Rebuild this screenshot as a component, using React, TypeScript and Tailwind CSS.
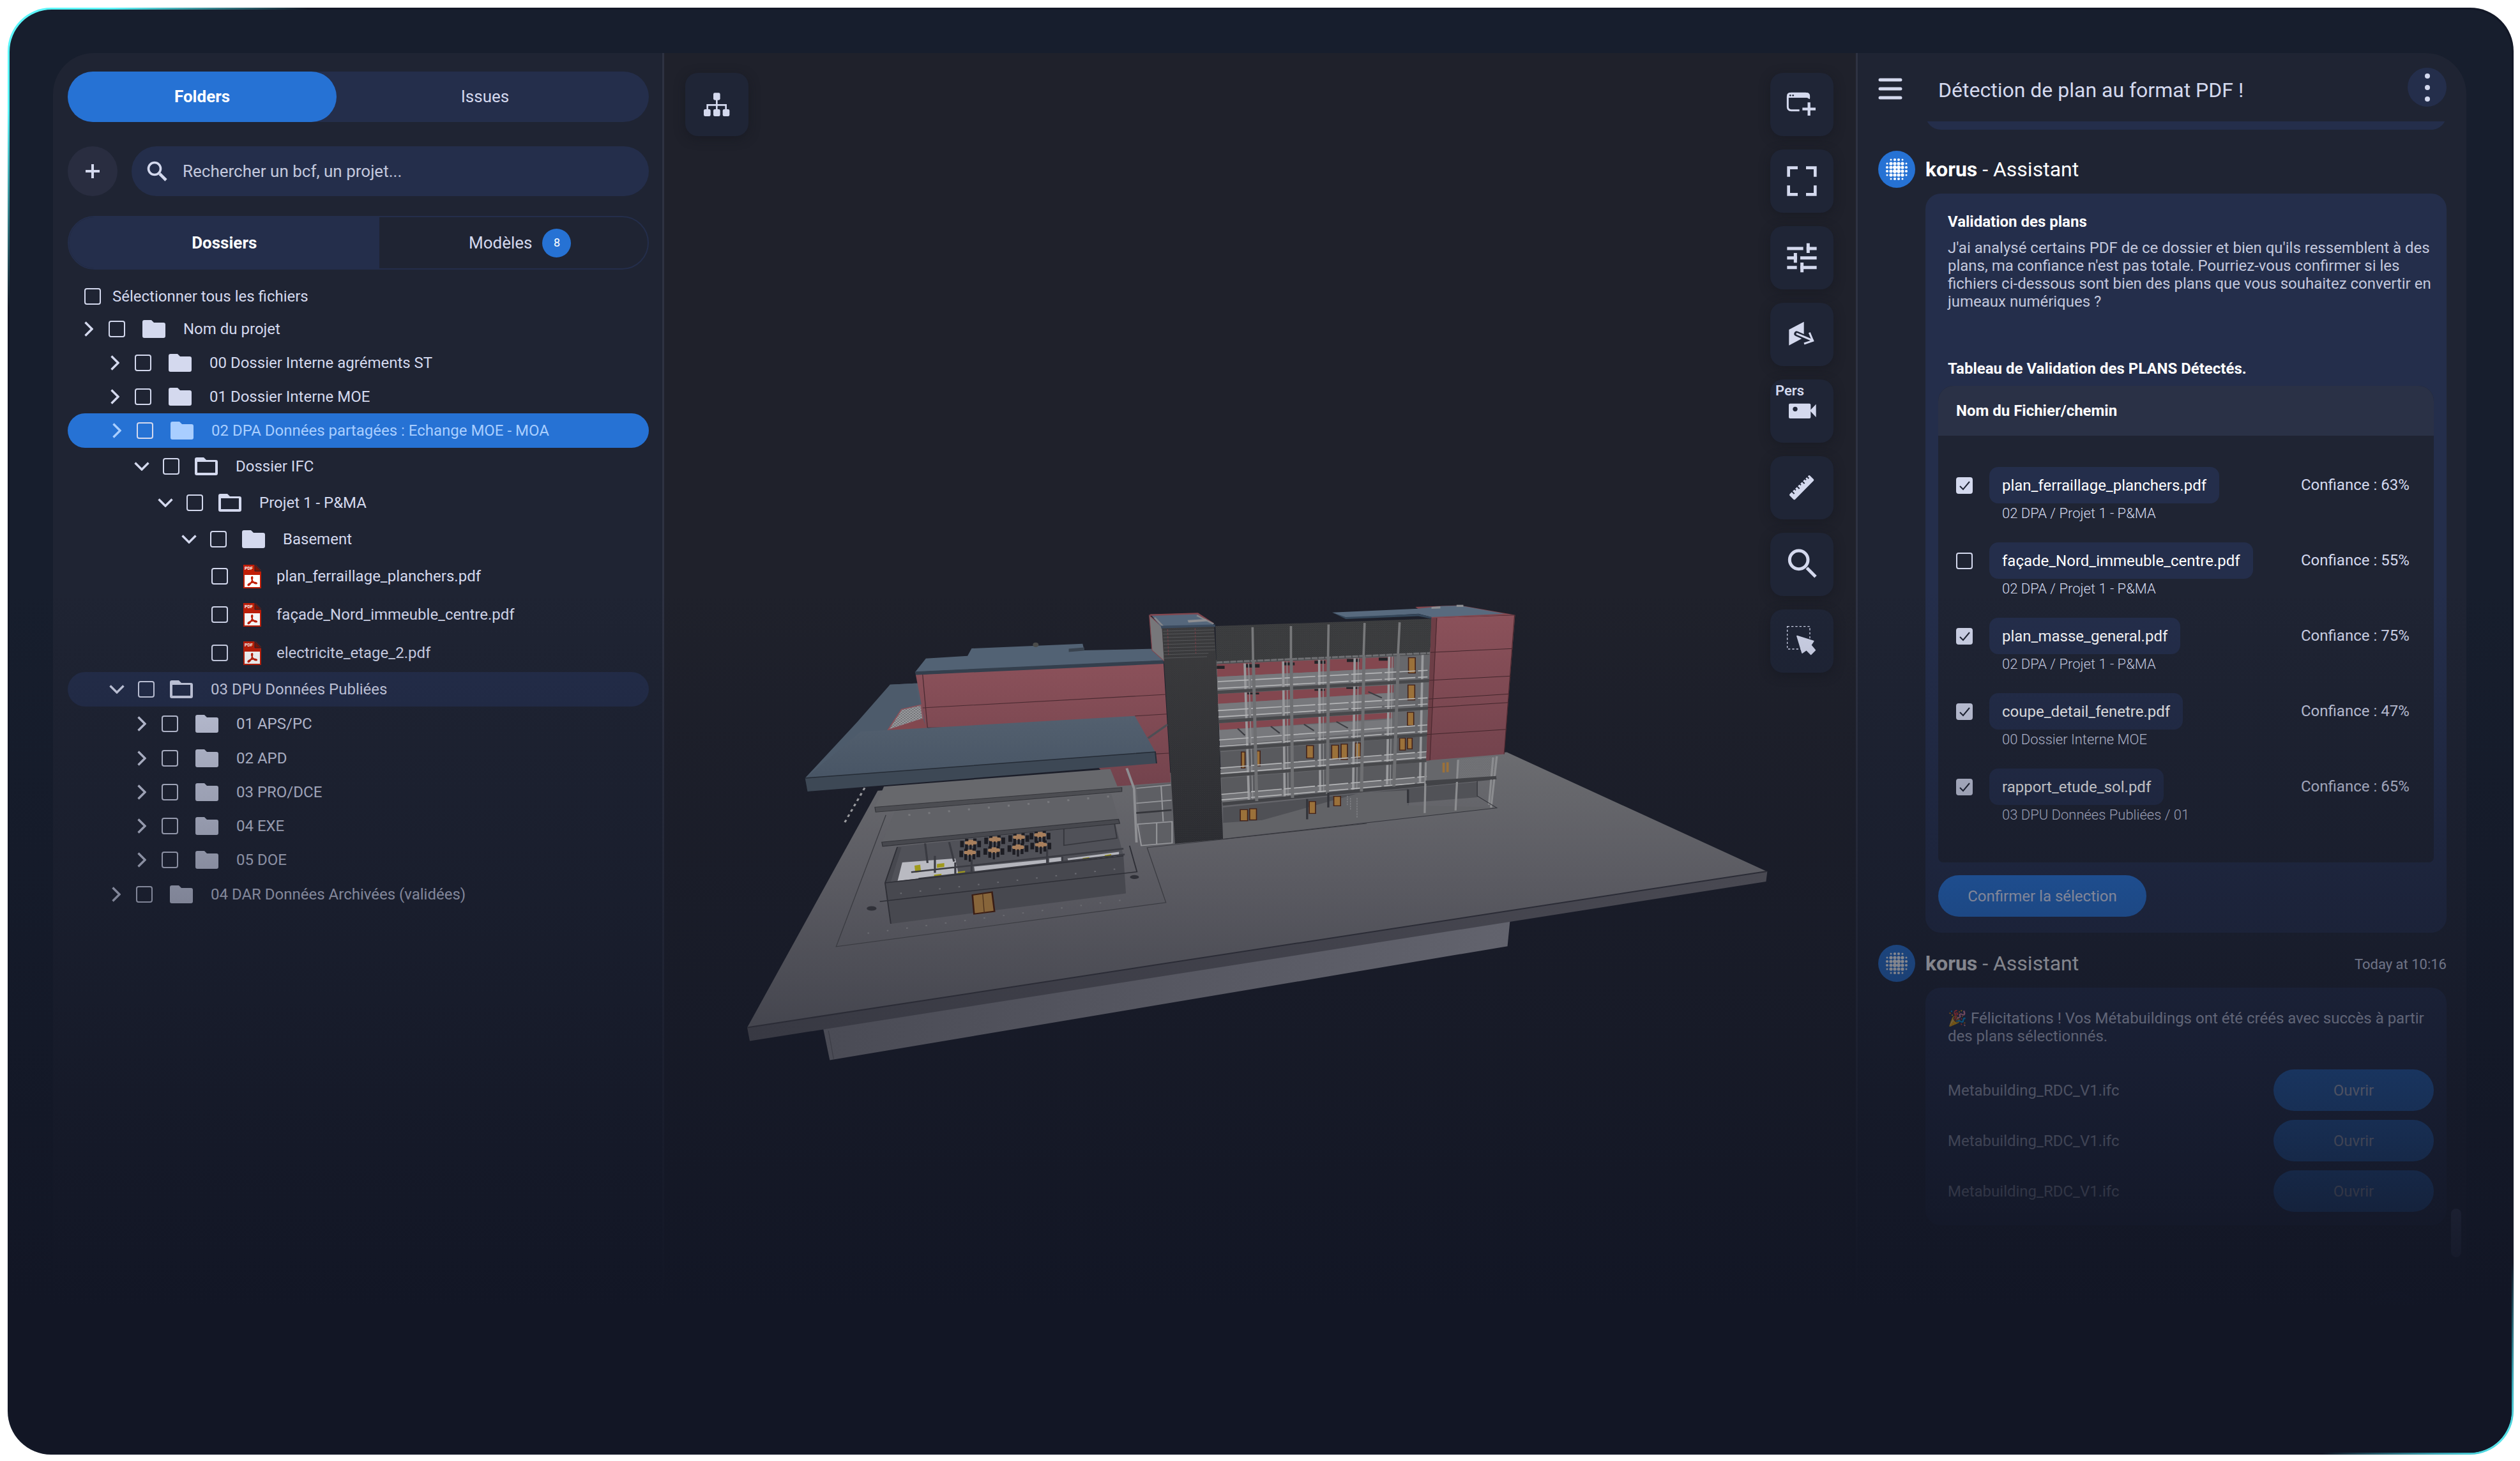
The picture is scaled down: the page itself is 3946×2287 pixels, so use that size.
import { useState, type ReactNode } from "react";
import { clsx } from "clsx";

type TreeKind = "closed" | "open" | "leaf";
type TreeIcon = "folder" | "outline" | "pdf";

type TreeRow = {
  label: string;
  kind: TreeKind;
  icon: TreeIcon;
  layout: string;
  tone?: "active" | "section";
};

const treeRows: TreeRow[] = [
  { label: "Nom du projet", kind: "closed", icon: "folder", layout: "h-[52px] pl-[26px]" },
  { label: "00 Dossier Interne agréments ST", kind: "closed", icon: "folder", layout: "h-[53px] pl-[67px]" },
  { label: "01 Dossier Interne MOE", kind: "closed", icon: "folder", layout: "h-[53px] pl-[67px]" },
  { label: "02 DPA Données partagées : Echange MOE - MOA", kind: "closed", icon: "folder", layout: "h-[54px] pl-[70px]", tone: "active" },
  { label: "Dossier IFC", kind: "open", icon: "outline", layout: "h-[57px] pl-[104px]" },
  { label: "Projet 1 - P&MA", kind: "open", icon: "outline", layout: "h-[57px] pl-[141px]" },
  { label: "Basement", kind: "open", icon: "folder", layout: "h-[57px] pl-[178px]" },
  { label: "plan_ferraillage_planchers.pdf", kind: "leaf", icon: "pdf", layout: "h-[60px] pl-[225px]" },
  { label: "façade_Nord_immeuble_centre.pdf", kind: "leaf", icon: "pdf", layout: "h-[60px] pl-[225px]" },
  { label: "electricite_etage_2.pdf", kind: "leaf", icon: "pdf", layout: "h-[60px] pl-[225px]" },
  { label: "03 DPU Données Publiées", kind: "open", icon: "outline", layout: "h-[54px] pl-[65px]", tone: "section" },
  { label: "01 APS/PC", kind: "closed", icon: "folder", layout: "h-[54px] pl-[109px]" },
  { label: "02 APD", kind: "closed", icon: "folder", layout: "h-[53px] pl-[109px]" },
  { label: "03 PRO/DCE", kind: "closed", icon: "folder", layout: "h-[53px] pl-[109px]" },
  { label: "04 EXE", kind: "closed", icon: "folder", layout: "h-[53px] pl-[109px]" },
  { label: "05 DOE", kind: "closed", icon: "folder", layout: "h-[54px] pl-[109px]" },
  { label: "04 DAR Données Archivées (validées)", kind: "closed", icon: "folder", layout: "h-[53px] pl-[69px]" },
];

const detectedPlans = [
  { file: "plan_ferraillage_planchers.pdf", path: "02 DPA / Projet 1 - P&MA", score: 63, checked: true },
  { file: "façade_Nord_immeuble_centre.pdf", path: "02 DPA / Projet 1 - P&MA", score: 55, checked: false },
  { file: "plan_masse_general.pdf", path: "02 DPA / Projet 1 - P&MA", score: 75, checked: true },
  { file: "coupe_detail_fenetre.pdf", path: "00 Dossier Interne MOE", score: 47, checked: true },
  { file: "rapport_etude_sol.pdf", path: "03 DPU Données Publiées / 01", score: 65, checked: true },
];

const metabuildings = ["Metabuilding_RDC_V1.ifc", "Metabuilding_RDC_V1.ifc", "Metabuilding_RDC_V1.ifc"];

/* ---------- shared ---------- */

function Checkbox({ label, defaultChecked = false }: { label?: string; defaultChecked?: boolean }) {
  return (
    <span className="relative block h-[26px] w-[26px] shrink-0">
      <input
        type="checkbox"
        aria-label={label}
        defaultChecked={defaultChecked}
        className="peer block h-[26px] w-[26px] appearance-none rounded-[4px] border-2 border-[#d4d9ee] checked:bg-[#d4d9ee]"
      />
      <svg viewBox="0 0 26 26" className="pointer-events-none absolute inset-0 hidden peer-checked:block">
        <path d="M6 14l5 5L21 7" fill="none" stroke="#1f2433" strokeWidth="2" />
      </svg>
    </span>
  );
}

function SearchGlyph({ className }: { className: string }) {
  return (
    <svg viewBox="0 0 32 32" className={className} fill="none" stroke="currentColor">
      <circle cx="12" cy="12" r="9.5" strokeWidth="3.6" />
      <path d="M20 20l10 10" strokeWidth="4.6" />
    </svg>
  );
}

/* ---------- folder tree ---------- */

function Chevron({ open }: { open: boolean }) {
  return open ? (
    <svg viewBox="0 0 24 14" className="w-6" fill="none" stroke="currentColor" strokeWidth="3.4">
      <path d="M1.5 1.5L12 12 22.5 1.5" />
    </svg>
  ) : (
    <svg viewBox="0 0 14 24" className="w-[14px]" fill="none" stroke="currentColor" strokeWidth="3.4">
      <path d="M1.5 1.5L12 12 1.5 22.5" />
    </svg>
  );
}

function FolderIcon({ outline }: { outline: boolean }) {
  return outline ? (
    <svg viewBox="0 0 36 28" className="w-9 shrink-0" fill="currentColor">
      <path
        fillRule="evenodd"
        d="M3 0h11l4 4h15a3 3 0 0 1 3 3v18a3 3 0 0 1-3 3H3a3 3 0 0 1-3-3V3a3 3 0 0 1 3-3zm1 7v17h28V7z"
      />
    </svg>
  ) : (
    <svg viewBox="0 0 36 28" className="w-9 shrink-0" fill="currentColor">
      <path d="M3 0h11l4 4h15a3 3 0 0 1 3 3v18a3 3 0 0 1-3 3H3a3 3 0 0 1-3-3V3a3 3 0 0 1 3-3z" />
    </svg>
  );
}

function PdfIcon() {
  return (
    <svg viewBox="0 0 28 37" className="w-7 shrink-0">
      <path d="M0 0h19l9 9v28H0z" fill="#c11e07" />
      <path d="M18 0v10h10z" fill="#7e1405" stroke="#1f2433" strokeWidth="1" />
      <path d="M2 16h24v19H2z" fill="#fff" />
      <text x="2" y="8" fill="#fff" fontSize="7" fontWeight="700" fontFamily="Roboto, sans-serif">
        PDF
      </text>
      <path
        d="M14 19c-2 0-1 4 .5 6.500s4 4.500 6 4c2-.5-1.500-2.500-6-1.700s-8 3-7 4.200 3.500-1.500 5-4.500 2.500-8.500 1.500-8.500z"
        fill="none"
        stroke="#c11e07"
        strokeWidth="2"
      />
    </svg>
  );
}

function TreeItem({ row }: { row: TreeRow }) {
  return (
    <li
      className={clsx(
        "flex items-center rounded-full",
        row.layout,
        row.tone === "active" && "bg-[#2672d4] text-[#a9ceff]",
        row.tone === "section" && "bg-[#242e4b]",
      )}
    >
      {row.kind !== "leaf" && (
        <button
          type="button"
          aria-label={row.label}
          aria-expanded={row.kind === "open"}
          className={clsx("flex shrink-0", row.kind === "open" ? "w-[45px]" : "w-[38px]")}
        >
          <Chevron open={row.kind === "open"} />
        </button>
      )}
      <label className={clsx("flex items-center", row.kind === "closed" ? "gap-[27px]" : "gap-6")}>
        <Checkbox />
        <span className={clsx("flex items-center", row.icon === "pdf" ? "gap-6" : "gap-7")}>
          {row.icon === "pdf" ? <PdfIcon /> : <FolderIcon outline={row.icon === "outline"} />}
          <span>{row.label}</span>
        </span>
      </label>
    </li>
  );
}

function FolderPanel() {
  const [query, setQuery] = useState("");

  return (
    <aside className="flex flex-col border-r-[3px] border-[#2e3242] bg-[#1f2433] pt-[29px] pr-[21px] pl-[23px]">
      <div className="grid h-[79px] grid-cols-[421fr_489fr] rounded-full bg-[#242e4b] text-[26px]">
        <button type="button" className="rounded-full bg-[#2672d4] font-bold text-white">
          Folders
        </button>
        <button type="button" className="pr-6">
          Issues
        </button>
      </div>

      <div className="mt-[38px] flex gap-[22px]">
        <button
          type="button"
          aria-label="Ajouter"
          className="flex h-[78px] w-[78px] shrink-0 items-center justify-center rounded-full bg-[#292d40]"
        >
          <svg viewBox="0 0 22 22" className="w-[22px]" stroke="currentColor" strokeWidth="4">
            <path d="M11 0v22M0 11h22" />
          </svg>
        </button>
        <label className="flex h-[78px] flex-1 items-center gap-6 rounded-full bg-[#242e4b] px-6">
          <SearchGlyph className="w-8" />
          <input
            type="text"
            value={query}
            onChange={(e) => setQuery(e.target.value)}
            placeholder="Rechercher un bcf, un projet..."
            className="flex-1 bg-transparent text-[26px] outline-none placeholder:text-[#c3c8dd]"
          />
        </label>
      </div>

      <div className="mt-[31px] grid h-[84px] grid-cols-[487fr_420fr] overflow-hidden rounded-full border-2 border-[#242e4b] text-[26px]">
        <button type="button" className="bg-[#242e4b] font-bold text-white">
          Dossiers
        </button>
        <button type="button" className="flex items-center justify-center gap-4 pl-5">
          Modèles
          <span className="flex h-[45px] w-[45px] items-center justify-center rounded-full bg-[#2672d4] text-lg text-white">
            8
          </span>
        </button>
      </div>

      <label className="mt-[17px] flex h-[50px] items-center gap-[18px] pl-[26px]">
        <Checkbox />
        Sélectionner tous les fichiers
      </label>
      <ul>
        {treeRows.map((row) => (
          <TreeItem key={row.label} row={row} />
        ))}
      </ul>
    </aside>
  );
}

/* ---------- viewer toolbar ---------- */

function ToolButton({ label, children }: { label: string; children: ReactNode }) {
  return (
    <button
      type="button"
      aria-label={label}
      className="relative h-[99px] w-[99px] rounded-[20px] bg-[#1f2536] shadow-[0_4px_16px_rgba(20,22,30,0.5)]"
    >
      {children}
    </button>
  );
}

function ToolGlyph({ children }: { children: ReactNode }) {
  return (
    <svg viewBox="0 0 297 297" className="h-full w-full" fill="currentColor">
      {children}
    </svg>
  );
}

function Toolbar() {
  return (
    <div className="absolute top-[31px] right-[35px] flex flex-col gap-[21px]">
      <ToolButton label="Nouvelle vue">
        <ToolGlyph>
          <path d="M137 176H98c-10 0-16-6-16-16v-48c0-10 6-15 16-15h68c9 0 16 5 16 14v8" fill="none" stroke="currentColor" strokeWidth="9" />
          <path d="M79 106c0-8 6-13 14-13h79c8 0 14 6 14 13v17c-6 0-10-6-14-6H79z" />
          <circle cx="94" cy="106" r="4" fill="#1f2536" />
          <circle cx="107" cy="106" r="4" fill="#1f2536" />
          <path d="M182 139v62M151 170h62" stroke="currentColor" strokeWidth="13" />
        </ToolGlyph>
      </ToolButton>
      <ToolButton label="Plein écran">
        <ToolGlyph>
          <path
            d="M129 86H86v42M168 86h43v42M86 169v42h43M211 169v42h-43"
            fill="none"
            stroke="currentColor"
            strokeWidth="14"
          />
        </ToolGlyph>
      </ToolButton>
      <ToolButton label="Réglages">
        <ToolGlyph>
          <path
            d="M79 105h76M170 105h48M79 149h47M141 149h77M79 194h46M141 194h77M178 80v46M118 126v46M149 171v46"
            stroke="currentColor"
            strokeWidth="15"
          />
        </ToolGlyph>
      </ToolButton>
      <ToolButton label="Plan de coupe">
        <ToolGlyph>
          <path d="M88 126l70-37v74l-70 37z" />
          <path d="M124 145l76 33" stroke="#1f2536" strokeWidth="24" strokeLinecap="round" />
          <path d="M126 146l74 31" stroke="currentColor" strokeWidth="9" strokeLinecap="round" />
          <path d="M184 140l16 38-41 14" fill="none" stroke="currentColor" strokeWidth="9" />
        </ToolGlyph>
      </ToolButton>
      <ToolButton label="Perspective">
        <span className="absolute top-1 left-2 text-[22px] leading-7 font-semibold">Pers</span>
        <ToolGlyph>
          <rect x="87" y="113" width="103" height="70" rx="6" />
          <path d="M186 146l29-30v61z" />
          <circle cx="117" cy="139" r="11" fill="#1f2536" />
        </ToolGlyph>
      </ToolButton>
      <ToolButton label="Mesurer">
        <ToolGlyph>
          <path
            d="M92 178l87-86q4-4 8 0l16 16q4 4 0 8l-86 87q-4 4-8 0l-17-17q-4-4 0-8z"
          />
          <path
            d="M100 164l13 13M112 152l8 8M124 140l13 13M136 128l8 8M148 116l13 13M160 104l8 8M170 93l11 12"
            stroke="#1f2536"
            strokeWidth="6"
          />
        </ToolGlyph>
      </ToolButton>
      <ToolButton label="Rechercher">
        <ToolGlyph>
          <circle cx="134" cy="127" r="43" fill="none" stroke="currentColor" strokeWidth="15" />
          <path d="M172 165l41 41" stroke="currentColor" strokeWidth="15" />
        </ToolGlyph>
      </ToolButton>
      <ToolButton label="Sélection par zone">
        <ToolGlyph>
          <rect x="80" y="80" width="106" height="106" fill="none" stroke="currentColor" strokeWidth="4" strokeDasharray="10 9" />
          <path
            d="M126 125l77 24-12 18 20 24-20 20-21-21-20 14z"
            stroke="currentColor"
            strokeWidth="5"
            strokeLinejoin="round"
          />
        </ToolGlyph>
      </ToolButton>
    </div>
  );
}

/* ---------- building model ---------- */

const tables = [
  [598, 822], [657, 812], [716, 805], [768, 798],
  [596, 852], [655, 845], [714, 836], [770, 828],
];

// left edge y / right edge y of each floor slab, from top to bottom
const slabs = [
  [350, 306], [490, 435], [628, 564], [758, 688], [884, 808],
];

const rails = [
  [440, 387], [472, 418], [576, 516], [606, 545], [714, 643], [744, 672],
  [846, 768], [872, 794], [970, 884], [996, 912],
];

const doors = [
  [402, 770, 14, 75], [460, 765, 14, 70], [652, 740, 26, 58], [748, 738, 26, 66], [784, 733, 24, 72],
  [838, 728, 20, 70], [1008, 705, 22, 56], [1038, 705, 18, 50], [1042, 328, 26, 72], [1040, 456, 26, 70],
  [1038, 584, 24, 62], [398, 1040, 28, 52], [434, 1036, 26, 52], [662, 1002, 24, 56], [756, 978, 26, 44],
];

function BuildingModel() {
  return (
    <svg viewBox="1163 920 1620 760" className="relative z-10 mx-auto mt-[837px] w-[87%]" role="img" aria-label="Maquette 3D">
      <defs>
        <linearGradient id="ground" gradientUnits="userSpaceOnUse" x1="0" y1="1180" x2="0" y2="1610">
          <stop offset="0" stopColor="#6b6c70" />
          <stop offset="0.45" stopColor="#5b5b62" />
          <stop offset="1" stopColor="#44454e" />
        </linearGradient>
        <linearGradient id="edge" x1="0" y1="0" x2="1" y2="0">
          <stop offset="0" stopColor="#383943" />
          <stop offset="1" stopColor="#494952" />
        </linearGradient>
        <linearGradient id="basement" x1="0" y1="0" x2="1" y2="0">
          <stop offset="0" stopColor="#4a4b55" />
          <stop offset="1" stopColor="#62636d" />
        </linearGradient>
        <linearGradient id="red" x1="0" y1="0" x2="0" y2="1">
          <stop offset="0" stopColor="#8b515a" />
          <stop offset="1" stopColor="#73434d" />
        </linearGradient>
        <linearGradient id="roof" x1="0" y1="0" x2="0" y2="1">
          <stop offset="0" stopColor="#53606f" />
          <stop offset="1" stopColor="#485565" />
        </linearGradient>
        <linearGradient id="tower" x1="0" y1="0" x2="0" y2="1">
          <stop offset="0" stopColor="#39393b" />
          <stop offset="1" stopColor="#292a2f" />
        </linearGradient>
        <pattern id="louvre" width="8" height="9" patternUnits="userSpaceOnUse">
          <path d="M0 2h5M4 6h4" stroke="#5b5c5e" strokeWidth="1" />
        </pattern>
        <pattern id="mesh" width="8" height="8" patternUnits="userSpaceOnUse">
          <path d="M0 0l8 8M8 0L0 8" stroke="#a5a6a9" strokeWidth="1.5" />
        </pattern>
      </defs>

      {/* ground plate */}
      <path d="M1289 1600l12 58L2360 1480l5-50z" fill="url(#basement)" />
      <path d="M1299 1612l8 44" stroke="#3a3b44" fill="none" />
      <path d="M1172 1607l4 21L2764 1379l2-16z" fill="url(#edge)" />
      <path d="M1376 1237L1172 1607 2765 1363 2359 1177z" fill="url(#ground)" />
      <path d="M1172 1607L2765 1363" stroke="#2b2c36" strokeWidth="2" />

      {/* low wing */}
      <g transform="translate(1140 900) scale(0.6378 0.5102)">
        <path d="M390 735L268 1138l808-135-46-168 538-74" fill="none" stroke="#3a3b41" strokeWidth="2" />
        <path d="M338 652l-50 108" stroke="#9a9b9f" strokeWidth="5" strokeDasharray="8 10" />

        <path d="M400 336l75-5 20 160-180 60z" fill="#4f5d6d" />
        <path d="M463 305l607-36 18 366-133 12-140-180H488z" fill="url(#red)" />
        <path d="M480 407l597-41M480 305l12 165M1000 432l78-6M1050 548l34-2" stroke="#4a2a31" strokeWidth="2" fill="none" />
        <path d="M1080 458l-48 42" stroke="#4d4e54" strokeWidth="6" />
        <path d="M192 622L320 450l80-114 62-4 18 108-88 36z" fill="#4d5b6b" />
        <path d="M428 412l48-14 5 42-86 35z" fill="#6d6e72" />
        <path d="M428 412l48-14 5 42-86 35z" fill="url(#mesh)" stroke="#8b515a" strokeWidth="3" />
        <path d="M395 475l86-35 12 38z" fill="#82484f" />

        <path d="M462 297l26-41 102-8 10-23 272-14 4 20 174-5 22 36z" fill="#526274" />
        <path d="M461 296l610-35v11L463 306z" fill="#343f4d" />
        <path d="M838 226l38-4v10l-38 4z" fill="#39434f" />
        <circle cx="757" cy="214" r="7" fill="#4a4b4a" />

        <path d="M192 622l136-142 672-48 50 110z" fill="url(#roof)" />
        <path d="M192 622l858-80 3 35-855 86z" fill="#3d4855" />
        <path d="M192 622l858-80 3 35" fill="none" stroke="#252c36" strokeWidth="3" />

        <path d="M385 648l555-54 18 56-595 62z" fill="#67686c" />
        <path d="M363 711l605-60v12l-603 63z" fill="#4c4d52" stroke="#35363b" strokeWidth="2" />
        <path d="M412 724l530-54 18 78-580 72z" fill="#616267" />
        <path d="M445 735l520-60" stroke="#77787c" strokeWidth="6" strokeDasharray="5 44" />

        <path d="M418 832l534-70 20 98-584 83z" fill="#505158" />
        <path d="M430 880l130-12 8 50-150 22z" fill="#b9bac1" />
        <path d="M606 893l180-22 2 16-180 24zM790 868l30-4v18l-30 4zM835 868l126-20v13l-124 18z" fill="#b4b5bc" />
        <path d="M460 890l14-3 2 22-14 2zM515 885l18-3v12l-18 3zM566 909l18-3v9l-18 3zM872 867l16-3v6l-16 3zM926 858l16-3v8l-16 3zM508 918l18-3v7l-18 3z" fill="#a09a1c" />
        <path d="M452 910l520-72M470 930l505-74M560 880v38M600 872v40M785 840v44M822 862v18M486 822l6 60M545 818l12 60M510 860v52" stroke="#3a3b42" strokeWidth="5" fill="none" />
        <path d="M826 778v50l130-22-6-44" fill="none" stroke="#36373d" strokeWidth="3" />
        {tables.map(([x, y]) => (
          <g key={`${x}-${y}`}>
            <ellipse cx={x} cy={y - 2} rx="15" ry="9" fill="#a87f5c" />
            <path
              d={`M${x - 26} ${y - 8}h9v20h-9zM${x + 16} ${y - 8}h9v20h-9zM${x - 14} ${y + 3}h7v18h-7zM${x + 6} ${y + 3}h7v16h-7zM${x - 3} ${y + 4}h5v22h-5zM${x - 14} ${y - 14}h8v7h-8zM${x + 6} ${y - 15}h8v7h-8z`}
              fill="#1d1d23"
            />
          </g>
        ))}
        <path d="M380 818l580-70 3 13-581 70z" fill="#47484e" stroke="#313238" strokeWidth="2" />
        <path d="M388 943l32-110 8 2-26 104 570-79 6 115-575 93z" fill="#47484f" />
        <path d="M388 943l584-83M402 1068l-14-125 30-110M375 1000l630-91-18-80" fill="none" stroke="#2e2f36" strokeWidth="3" />
        <path d="M602 980l48-9 6 59-50 8z" fill="#87653a" stroke="#3a1d14" strokeWidth="4" />
        <path d="M627 976l4 58" stroke="#4a2f1b" strokeWidth="2" />
        <ellipse cx="355" cy="1021" rx="12" ry="7" fill="#303138" />
        <ellipse cx="999" cy="925" rx="11" ry="6" fill="#303138" />
        <path d="M345 1097l640-104M425 975l540-76" stroke="#6a6b71" strokeWidth="4" strokeDasharray="4 44" />
        <path d="M980 592l18 62 6 165" fill="none" stroke="#8e8f93" strokeWidth="6" />
      </g>

      {/* main building */}
      <g transform="translate(1780 920) scale(0.4082 0.3333)">
        <path d="M0 930l135-16 12 285-120 15z" fill="#5e5f64" />
        <path d="M0 940l132-16M0 1010l135-14M5 1108l132-12v100l-118 12zM78 1102v98M95 930l8 165" fill="none" stroke="#96979b" strokeWidth="5" />
        <path d="M0 1056l135-14" stroke="#35363b" strokeWidth="8" />

        <path d="M305 340l825-60-15 640-785 100z" fill="#67686c" />
        <path d="M309 358l676-34v52l-675 42zM313 498l672-42v36l-672 52zM318 635l662-50v26l-660 56z" fill="#83474f" />
        <path d="M309 418l676-42v55l-674 52zM313 544l672-52v55l-670 64zM318 667l662-50v52l-660 70z" fill="#77787c" />
        <path d="M322 770l790-74-4 105-783 78zM326 894l784-78-3 100-779 90z" fill="#595a5e" />
        <path d="M324 846l786-78v30l-785 82zM328 970l780-86v32l-779 90z" fill="#707175" />
        <path d="M308 366h30v14h-30zM420 358h52v16h-52zM566 350h40v14h-40zM682 342h42v14h-42zM806 334h48v14h-48zM928 328h34v14h-34zM425 492h45v8h-45zM682 475h40v8h-40zM804 466h48v8h-48z" fill="#232428" />
        <path d="M388 660l28 32M515 650l34 32M642 640l38 30M766 628l44 30M888 488l52 28" stroke="#3c3d42" strokeWidth="6" />
        <path d="M332 1030l710-90v80l-470 60-240 26z" fill="#4f5055" />
        <path d="M480 1090L860 960l180-10v70l340 10-900 120-148 26v-74z" fill="#626367" />
        <path d="M1042 940l264-30v72l-264 26z" fill="#515257" />

        {doors.map(([x, y, w, h]) => (
          <rect key={`${x}-${y}`} x={x} y={y} width={w} height={h} fill="#9b713a" stroke="#43231a" strokeWidth="4" />
        ))}
        <path d="M415 355l16 640M562 345l6 640M700 338l4 620M836 330l-6 620M968 322l-8 600M1096 312l-10 600" fill="none" stroke="#98999c" strokeWidth="9" />
        <path d="M430 355l16 640M577 345l4 640M715 338l2 620M850 330l-6 620M980 322l-8 600" fill="none" stroke="#898a8d" strokeWidth="4" />
        {rails.map(([l, r]) => (
          <path key={l} d={`M312 ${l}L1115 ${r}`} stroke="#b4b5b7" strokeWidth="5" strokeDasharray="118 10" />
        ))}
        {slabs.map(([l, r]) => (
          <path key={l} d={`M308 ${l}L1122 ${r}`} stroke="#47484b" strokeWidth="15" />
        ))}
        <path d="M330 1014l1048-124" stroke="#424347" strokeWidth="16" />
        <path d="M445 185l16 815M592 180l6 805M736 172l-4 795M874 165l-12 790M1008 162l-22 770" fill="none" stroke="#6e6f72" strokeWidth="12" />

        <path d="M303 180l827-35-5 157-818 45z" fill="#363739" />
        <path d="M303 180l827-35-5 157-818 45z" fill="url(#louvre)" />
        <path d="M445 185l2 155M592 180v152M736 172l-2 152M874 165l-4 152M1008 162l-6 148" stroke="#77787a" strokeWidth="9" fill="none" />
        <path d="M308 350l817-44" stroke="#6e6f72" strokeWidth="9" strokeDasharray="22 4" />

        {/* stair tower */}
        <path d="M50 130l50 55 8 160-48-52z" fill="#77777a" stroke="#83474f" strokeWidth="3" />
        <path d="M55 125l180-5 62 55-200 12z" fill="#55677c" />
        <path d="M52 128l183-7 60 48" fill="none" stroke="#83474f" strokeWidth="7" />
        <path d="M70 140l32 40M232 130l64 40" stroke="#85868a" strokeWidth="7" />
        <path d="M196 152l70-5 6 10-72 6z" fill="#8d8e92" />
        <path d="M94 178l208-6v12l-206 8z" fill="#3b4b5f" />
        <path d="M98 190l200-7 8 160 26 835-184 22-42-860z" fill="url(#tower)" />
        <path d="M98 190l200-7 8 160 26 835-184 22-42-860z" fill="url(#louvre)" fillOpacity="0.5" />
        <path d="M102 204l196-7M102 218l196-7M103 234l196-7M104 250l196-7M104 266l196-7M105 282l196-7M106 298l196-7M106 314l170-7M106 330l165-7" stroke="#5f6062" strokeWidth="2" />
        <path d="M120 195l3 120M225 190l3 118" stroke="#743f47" strokeWidth="3" strokeDasharray="10 6" />

        {/* right block */}
        <path d="M1110 810l275-20-10 105-262 22z" fill="#66676b" />
        <path d="M1235 802l150-12-10 100-140 14z" fill="url(#mesh)" fillOpacity="0.4" />
        <rect x="1172" y="820" width="9" height="46" fill="#9b713a" />
        <rect x="1187" y="818" width="9" height="46" fill="#9b713a" />
        <path d="M1108 818l-4 238M1232 806l-10 238M1380 790l-22 240M1366 795l-16 222" fill="none" stroke="#8b8c8f" strokeWidth="8" />
        <path d="M1108 912l270-22" stroke="#424347" strokeWidth="15" />
        <path d="M1130 140l320-12-42 652-298 30z" fill="url(#red)" />
        <path d="M1130 140l22-1-28 670-14 1z" fill="#6d3e46" />
        <path d="M1126 303l316-18M1122 434l313-20M1118 522l310-24M1116 562l308-24M1112 688l304-24" stroke="#43262c" strokeWidth="3" />
        <path d="M1150 140l-26 668M1130 140l318-12-40 652" fill="none" stroke="#4d2a31" strokeWidth="3" />
        <path d="M1068 90l170-8 210 45-318 16z" fill="#83474f" />
        <path d="M750 116l330-18 90-12 70-2 170 38-280 16-50-16-275 20z" fill="#586a7e" />
        <path d="M750 116l52 22 278-15 50 14v8l-50-12-278 14z" fill="#35475a" />
        <path d="M1130 90l34-3v10l-34 2zM1226 80h26v10h-26z" fill="#8d8e92" />
        <path d="M332 1178l1048-146-75-56v-70" fill="none" stroke="#33343a" strokeWidth="3" />
        <path d="M654 990v95M735 960v70M1040 945v64" stroke="#33343a" strokeWidth="8" />
        <path d="M820 985v55M845 985v95M808 975v45" stroke="#85868a" strokeWidth="3" strokeDasharray="8 4" />
      </g>
    </svg>
  );
}

function Viewer() {
  return (
    <main className="relative bg-[#1f212b]">
      <BuildingModel />
      <div className="absolute top-[31px] left-[33px]">
        <ToolButton label="Arborescence">
          <ToolGlyph>
            <rect x="132" y="94" width="32" height="34" rx="7" />
            <rect x="87" y="171" width="32" height="33" rx="7" />
            <rect x="132" y="171" width="32" height="33" rx="7" />
            <rect x="176" y="171" width="32" height="33" rx="7" />
            <path d="M148 125v50M104 175v-24h87v24" fill="none" stroke="currentColor" strokeWidth="8" />
          </ToolGlyph>
        </ToolButton>
      </div>
      <Toolbar />
    </main>
  );
}

/* ---------- assistant ---------- */

function KorusAvatar() {
  const steps = [-15, -9, -3, 3, 9, 15];
  return (
    <svg viewBox="0 0 58 58" className="w-[58px] shrink-0">
      <circle cx="29" cy="29" r="29" fill="#2672d4" />
      {steps.map((y) =>
        steps.map((x) => {
          const d = Math.hypot(x, y);
          if (d > 20) return null;
          return <circle key={`${x}:${y}`} cx={29 + x} cy={29 + y} r={d < 6 ? 3 : d < 14 ? 2.6 : d < 16 ? 2.1 : 1.5} fill="#fff" />;
        }),
      )}
    </svg>
  );
}

function MessageHeader({ time }: { time?: string }) {
  return (
    <div className="flex items-center">
      <KorusAvatar />
      <p className="ml-4 flex-1 text-[32px] leading-10 text-white">
        <strong className="font-bold">korus</strong> - Assistant
      </p>
      {time && <time className="pt-1 text-[22px]">{time}</time>}
    </div>
  );
}

function PlansTable() {
  return (
    <div className="mt-[13px] overflow-hidden rounded-t-3xl rounded-b-lg bg-[#1f2433] pb-[29px]">
      <table className="w-full border-collapse text-left">
        <thead>
          <tr className="h-[78px] bg-[#2a3146] text-white">
            <th colSpan={3} className="pl-7 font-bold">
              Nom du Fichier/chemin
            </th>
          </tr>
        </thead>
        <tbody className="before:block before:h-[49px]">
          {detectedPlans.map((plan) => (
            <tr key={plan.file} className="h-[118px] align-top">
              <td className="w-20 pt-4 pl-7">
                <Checkbox label={plan.file} defaultChecked={plan.checked} />
              </td>
              <td>
                <a href="#plan" className="inline-flex h-[57px] items-center rounded-[14px] bg-[#242e4b] px-5 text-white">
                  {plan.file}
                </a>
                <p className="pl-5 text-[22px] leading-8 font-light">{plan.path}</p>
              </td>
              <td className="w-[208px] leading-[57px]">Confiance : {plan.score}%</td>
            </tr>
          ))}
        </tbody>
      </table>
    </div>
  );
}

function AssistantPanel() {
  return (
    <section className="relative border-l-[3px] border-[#2e3242] bg-[#1f2433] pt-[23px] pr-[31px] pl-8">
      <header className="flex items-center">
        <button type="button" aria-label="Menu" className="pt-1">
          <svg viewBox="0 0 38 34" className="w-[38px]" stroke="currentColor" strokeWidth="5" strokeLinecap="round">
            <path d="M3 3h32M3 17h32M3 31h32" />
          </svg>
        </button>
        <h1 className="ml-14 flex-1 pt-2 text-[32px] leading-10">Détection de plan au format PDF !</h1>
        <button
          type="button"
          aria-label="Options"
          className="flex h-[61px] w-[61px] flex-col items-center justify-center gap-[10px] rounded-full bg-[#242e4b]"
        >
          <span className="h-2 w-2 rounded-full bg-[#d4d9ee]" />
          <span className="h-2 w-2 rounded-full bg-[#d4d9ee]" />
          <span className="h-2 w-2 rounded-full bg-[#d4d9ee]" />
        </button>
      </header>

      {/* tail of the previous message, scrolled under the header */}
      <div className="mt-[23px] ml-[74px] flex h-[13px] items-end overflow-hidden">
        <div className="h-14 w-full shrink-0 rounded-3xl bg-[#242e4b]" />
      </div>

      <article className="mt-[33px]">
        <MessageHeader />
        <div className="mt-[9px] ml-[74px] rounded-3xl bg-[#242e4b] px-5 pt-[30px] pb-[25px]">
          <div className="pl-[15px] leading-7">
            <h2 className="font-bold text-white">Validation des plans</h2>
            <p className="mt-[13px] text-[#c3c8dd]">
              J'ai analysé certains PDF de ce dossier et bien qu'ils ressemblent à des plans, ma confiance n'est pas totale.
              Pourriez-vous confirmer si les fichiers ci-dessous sont bien des plans que vous souhaitez convertir en jumeaux
              numériques ?
            </p>
            <h2 className="mt-[77px] font-bold text-white">Tableau de Validation des PLANS Détectés.</h2>
          </div>
          <PlansTable />
          <button type="button" className="mt-5 h-[65px] w-[326px] rounded-full bg-[#2672d4]">
            Confirmer la sélection
          </button>
        </div>
      </article>

      <article className="mt-[19px]">
        <MessageHeader time="Today at 10:16" />
        <div className="mt-[9px] ml-[74px] rounded-3xl bg-[#242e4b] px-5 pt-[34px] pb-[21px]">
          <p className="pl-[15px] leading-7">
            🎉 Félicitations ! Vos Métabuildings ont été créés avec succès à partir des plans sélectionnés.
          </p>
          <ul className="mt-[38px] flex flex-col gap-[14px]">
            {metabuildings.map((name, index) => (
              <li key={index} className="flex items-center justify-between pl-[15px]">
                {name}
                <button type="button" className="h-[65px] w-[251px] rounded-full bg-[#2672d4]">
                  Ouvrir
                </button>
              </li>
            ))}
          </ul>
        </div>
      </article>

      <div className="mt-[103px] flex h-[35px] justify-end overflow-hidden pr-10">
        <button type="button" aria-label="Envoyer" className="h-[86px] w-[86px] shrink-0 rounded-full bg-[#2b3a66]" />
      </div>
      <div className="absolute right-2 bottom-[88px] h-[76px] w-4 rounded-full bg-[#555c7c]" />
    </section>
  );
}

export default function App() {
  return (
    <div className="flex min-h-screen flex-col bg-white pt-3 pr-[10px] pb-[10px] pl-3 font-['Roboto','Noto_Sans',sans-serif] text-2xl text-[#d4d9ee]">
      <div className="flex flex-1 flex-col rounded-[68px] bg-[#131827] bg-[radial-gradient(circle_at_0_0,#5cf6fa_0,#5cf6fa_160px,transparent_470px),radial-gradient(circle_at_100%_100%,#5cf6fa_0,#3aa5b4_120px,transparent_300px)] p-[3px]">
        <div className="relative flex-1 overflow-hidden rounded-[66px] bg-[#171e2d] pt-[68px] pr-[71px] pl-[68px]">
          <div className="grid grid-cols-[957fr_1866fr_956fr] overflow-hidden rounded-t-[64px]">
            <FolderPanel />
            <Viewer />
            <AssistantPanel />
          </div>
          <div className="pointer-events-none absolute inset-0 bg-[linear-gradient(to_bottom,transparent_40%,#121625_90%)]" />
        </div>
      </div>
    </div>
  );
}
